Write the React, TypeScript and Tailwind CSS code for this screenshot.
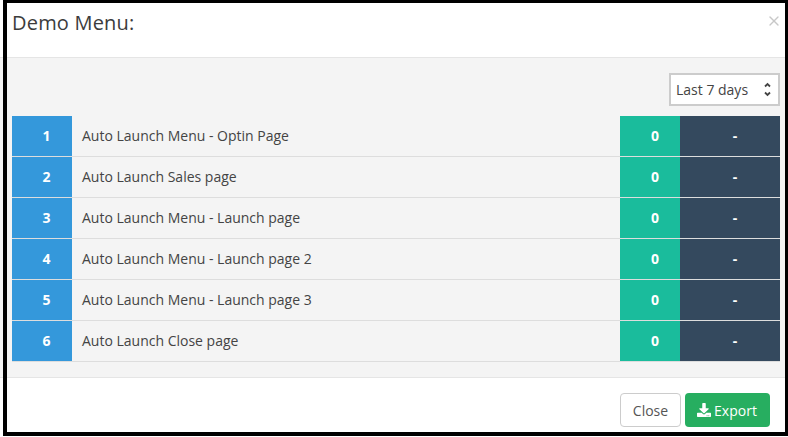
import { X } from 'lucide-react'
import { FaDownload } from 'react-icons/fa'

const rows = [
  'Auto Launch Menu - Optin Page',
  'Auto Launch Sales page',
  'Auto Launch Menu - Launch page',
  'Auto Launch Menu - Launch page 2',
  'Auto Launch Menu - Launch page 3',
  'Auto Launch Close page',
]

export default function App() {
  return (
    <div className="relative w-[788px] h-[437px] overflow-hidden bg-white text-[14px] text-[#333] font-['Open_Sans',sans-serif]">
      <div className="flex h-[58px] justify-between border-b border-[#e5e5e5] pl-[12px] pr-[6px] pt-[9px]">
        <h4 className="text-[20px] leading-[28px] font-medium tracking-[0.2px] text-[#3c3c3c]">Demo Menu:</h4>
        <X className="mt-[4px] h-4 w-4 text-[#c8c8c8]" strokeWidth={2} />
      </div>

      <div className="h-[320px] border-b border-[#e5e5e5] bg-[#f4f4f4] pl-3 pr-2 pt-[15px]">
        <div className="flex justify-end">
          <div className="flex h-[33px] w-[111px] items-center justify-between border-2 border-[#ccc] bg-white pl-[5px] pr-[7px] text-[#444]">
            <span>Last 7 days</span>
            <svg width="7" height="15" viewBox="0 0 7 15" fill="none" stroke="#444" strokeWidth="1.8">
              <path d="M1 4.5l2.5-2.5 2.5 2.5" />
              <path d="M1 10.5l2.5 2.5 2.5-2.5" />
            </svg>
          </div>
        </div>

        <div className="mt-[10px]">
          {rows.map((name, i) => (
            <div key={i} className="flex h-[41px] border-b border-[#ddd]">
              <div className="flex w-[60px] items-center justify-center bg-[#3498db] pb-[2px] pl-[9px] font-bold text-white">{i + 1}</div>
              <div className="flex flex-1 items-center pb-[2px] pl-[10px] text-[#444]">{name}</div>
              <div className="flex w-[60px] items-center justify-center bg-[#1abc9c] pb-[2px] pl-[10px] font-bold text-white">0</div>
              <div className="flex w-[100px] items-center justify-center bg-[#34495e] pb-[2px] pl-[10px] font-bold text-white">-</div>
            </div>
          ))}
        </div>
      </div>

      <div className="flex justify-end gap-1 pr-[18px] pt-[15px]">
        <button className="h-[34px] w-[61px] rounded border border-[#ccc] bg-white text-[#555]">Close</button>
        <button className="flex h-[34px] w-[85px] items-center justify-center gap-[3px] rounded bg-[#27ae60] pr-[1px] text-white">
          <FaDownload className="h-[14px] w-[14px]" />
          Export
        </button>
      </div>

      <div className="pointer-events-none absolute bottom-[1px] left-[3px] right-0 top-0 border-b-4 border-l-4 border-r-[3px] border-t-[3px] border-black" />
    </div>
  )
}
